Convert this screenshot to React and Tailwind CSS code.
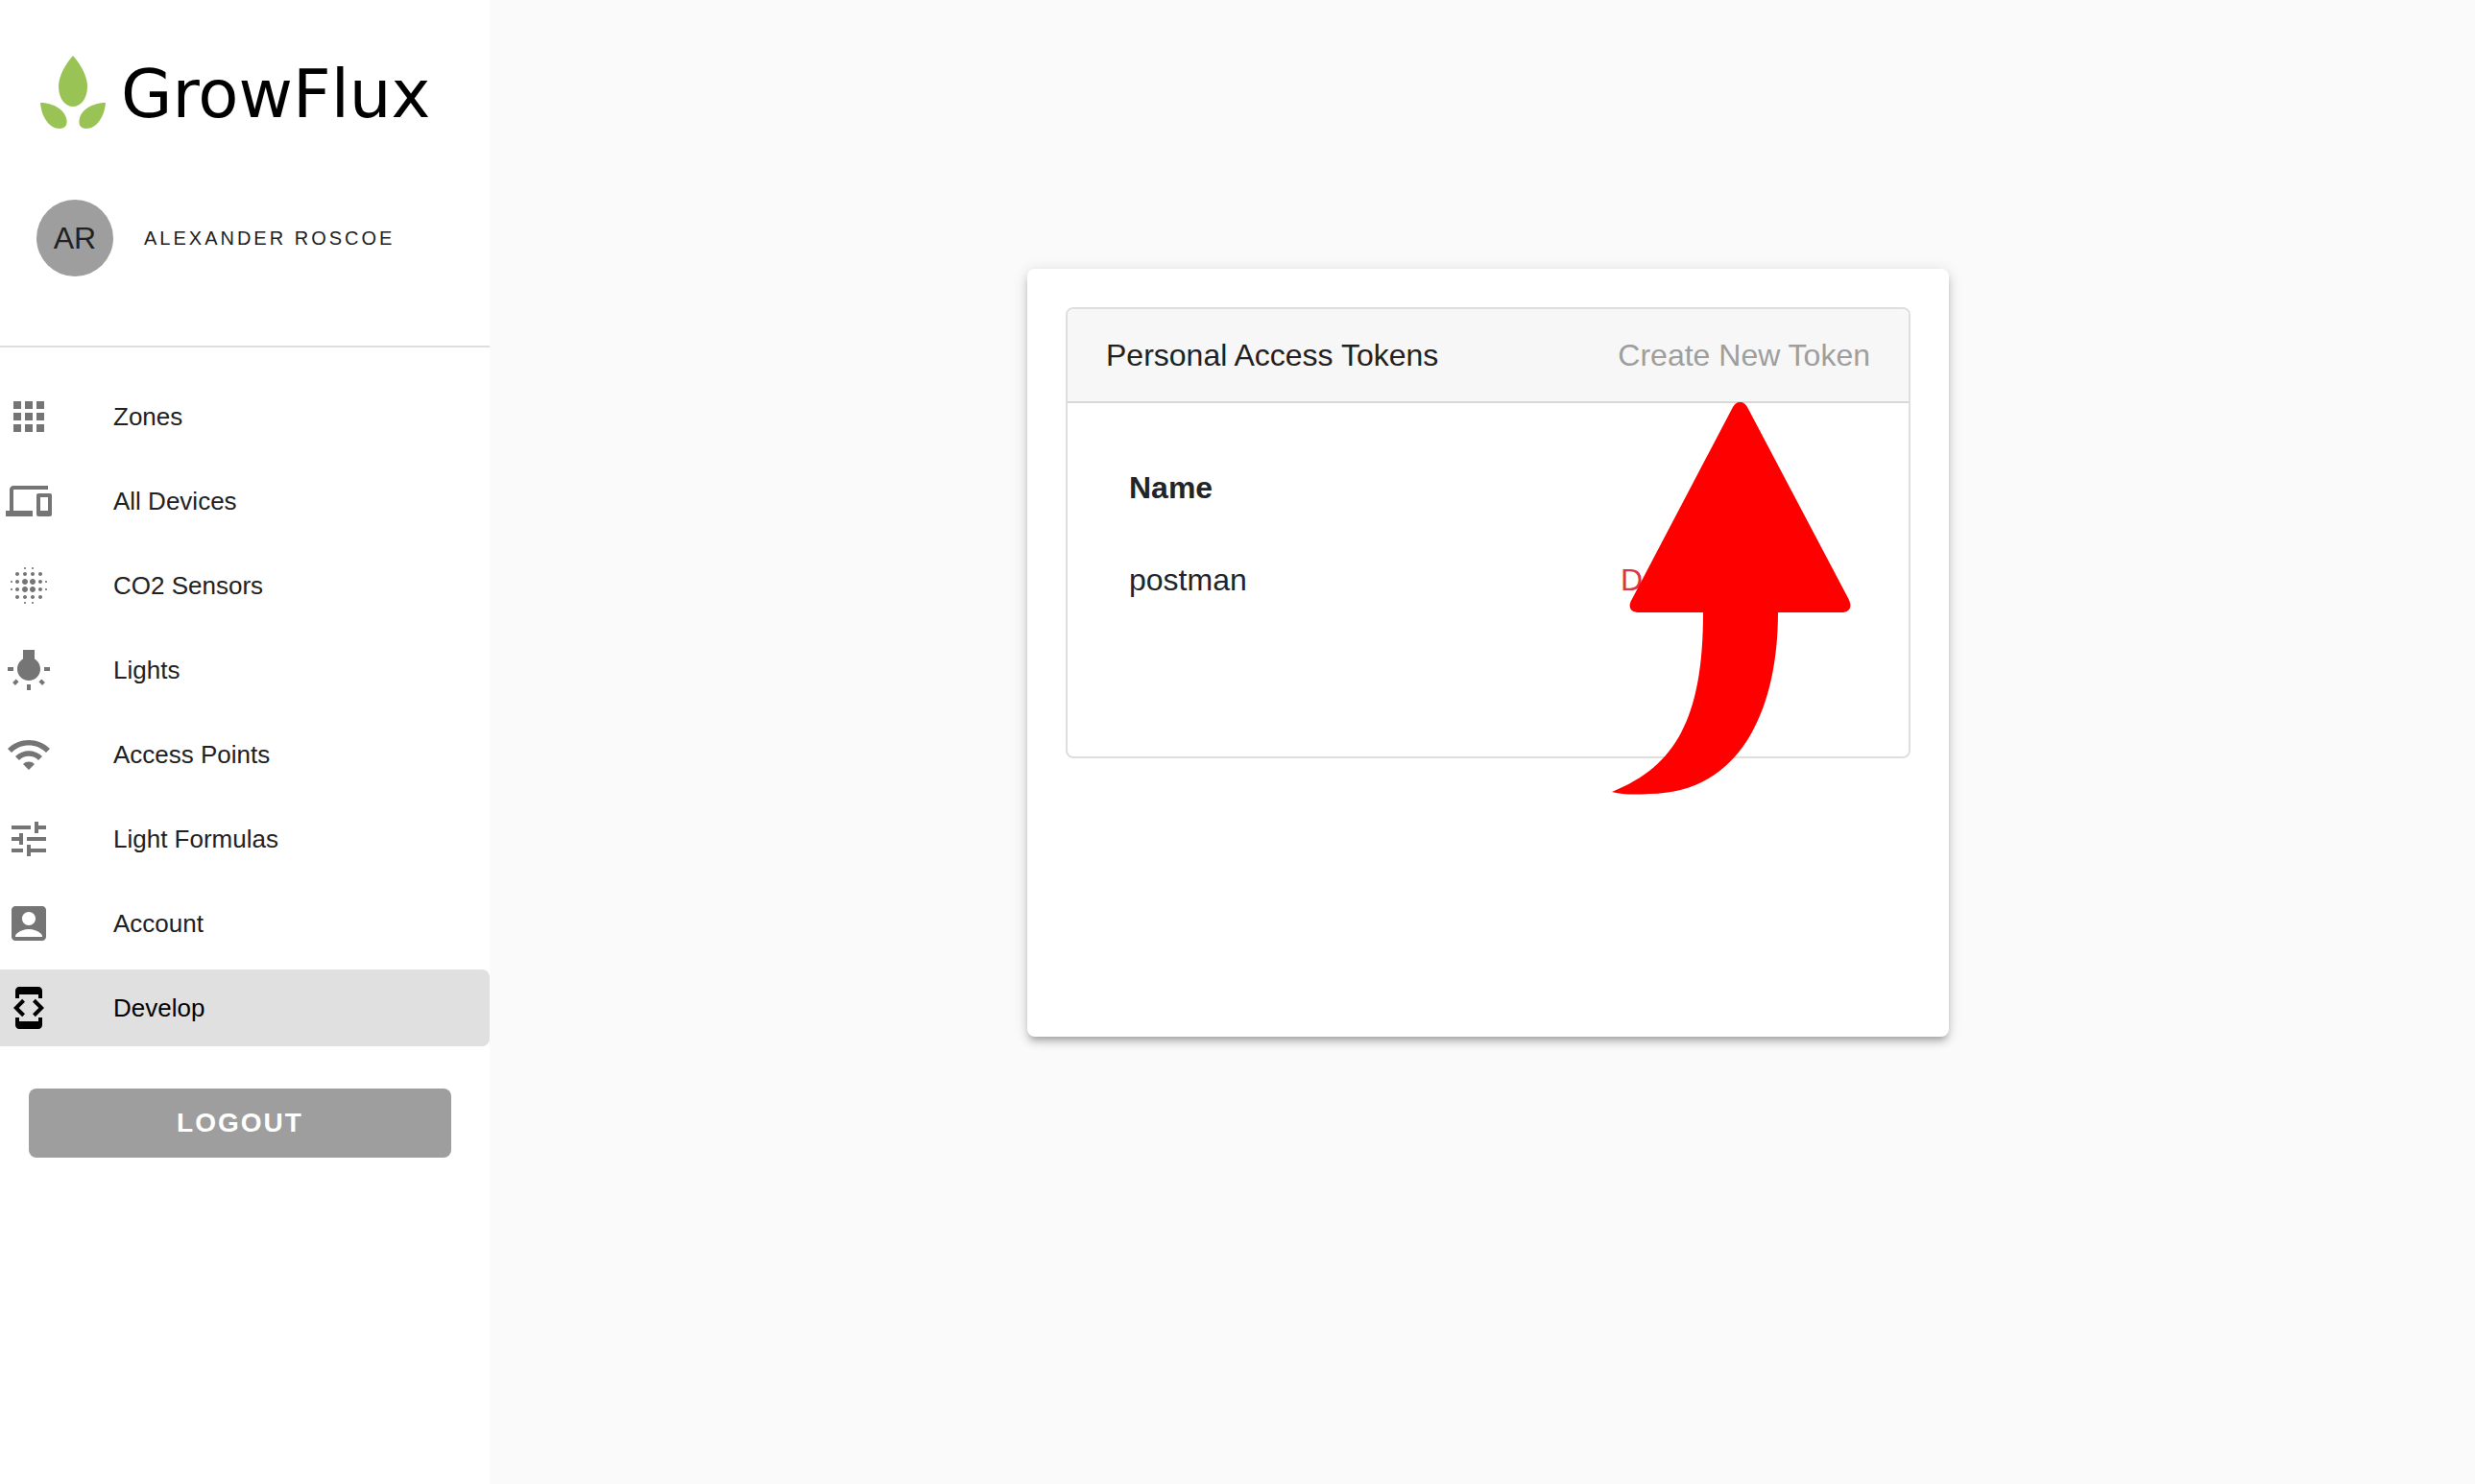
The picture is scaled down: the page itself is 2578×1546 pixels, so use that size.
import {
  MdApps,
  MdDevices,
  MdBlurOn,
  MdWbIncandescent,
  MdWifi,
  MdTune,
  MdAccountBox,
  MdDeveloperMode,
} from "react-icons/md";

const navItems = [
  { label: "Zones", Icon: MdApps },
  { label: "All Devices", Icon: MdDevices },
  { label: "CO2 Sensors", Icon: MdBlurOn },
  { label: "Lights", Icon: MdWbIncandescent },
  { label: "Access Points", Icon: MdWifi },
  { label: "Light Formulas", Icon: MdTune },
  { label: "Account", Icon: MdAccountBox },
  { label: "Develop", Icon: MdDeveloperMode, active: true },
];

function Logo() {
  return (
    <div className="flex h-20 items-center gap-4 pl-[42px]">
      <svg viewBox="0 0 68 78" className="h-[78px] w-[68px] shrink-0" fill="#99c455" aria-hidden="true">
        <path d="M34 1C42 10 49 22 49 33C49 46 42 54 34 54C26 54 19 46 19 33C19 22 26 10 34 1Z" />
        <path d="M0 50C13 50 25 57 27 66C29 73 26 77 20 77C9 77 1 64 0 50Z" />
        <path d="M68 50C55 50 43 57 41 66C39 73 42 77 48 77C59 77 67 64 68 50Z" />
      </svg>
      <span className="pt-1 font-['DejaVu_Sans',sans-serif] text-[69px] leading-20 text-black">GrowFlux</span>
    </div>
  );
}

function Sidebar() {
  return (
    <aside className="min-h-screen w-[510px] shrink-0 bg-white">
      <div className="border-b-2 border-[#dedede] pt-14 pb-[72px]">
        <Logo />
        <div className="mt-[72px] flex items-center gap-8 pl-[38px]">
          <div className="flex size-20 items-center justify-center rounded-full bg-[#9e9e9e] text-[32px]">AR</div>
          <span className="text-[20px] tracking-[3px] uppercase">Alexander Roscoe</span>
        </div>
      </div>
      <nav className="mt-8 flex flex-col gap-2">
        {navItems.map(({ label, Icon, active }) => (
          <a
            key={label}
            href="#"
            className={
              active
                ? "flex h-20 items-center gap-16 rounded-r-lg bg-[#e0e0e0] pl-1.5 text-[26px] text-black"
                : "flex h-20 items-center gap-16 rounded-r-lg pl-1.5 text-[26px]"
            }
          >
            <Icon className={active ? "size-12 text-black" : "size-12 text-[#757575]"} />
            {label}
          </a>
        ))}
      </nav>
      <div className="mt-11 pr-10 pl-[30px]">
        <button className="h-[72px] w-full rounded-lg bg-[#9e9e9e] text-[28px] font-bold tracking-[2px] text-white uppercase">
          Logout
        </button>
      </div>
    </aside>
  );
}

function PointerArrow() {
  return (
    <svg
      viewBox="0 0 252 412"
      className="pointer-events-none absolute top-[139px] left-[608px] h-[412px] w-[252px]"
      fill="#ff0000"
      aria-hidden="true"
    >
      <path d="M127 5C131 -2 138 -2 142 5L247 204C252 213 249 219 240 219H174C174 330 128 408 40 408C24 409 13 409 1 406C67 379 96 330 96 219H30C20 219 17 213 22 205Z" />
    </svg>
  );
}

export default function App() {
  return (
    <div className="flex min-h-screen bg-[#fafafa] font-['Liberation_Sans',Arial,sans-serif] text-[#212121]">
      <Sidebar />
      <main className="flex grow items-start justify-center pt-[280px] pl-3">
        <section className="relative min-h-[800px] w-full max-w-[960px] rounded-lg bg-white p-10 shadow-[0_6px_6px_-4px_rgba(0,0,0,0.2),0_6px_8px_0_rgba(0,0,0,0.14),0_2px_16px_0_rgba(0,0,0,0.12)]">
          <div className="overflow-hidden rounded-lg border-2 border-[#dedede] text-[32px] leading-[48px]">
            <header className="flex items-center justify-between border-b-2 border-[#d8d8d8] bg-[#f7f7f7] px-10 py-6">
              <h1>Personal Access Tokens</h1>
              <button className="text-[#9e9e9e]">Create New Token</button>
            </header>
            <div className="px-10 pt-10 pb-[136px] text-[#212529]">
              <table className="w-full table-fixed text-left">
                <thead>
                  <tr>
                    <th className="p-6 font-bold">Name</th>
                    <th className="w-[284px] p-6" aria-label="Actions" />
                  </tr>
                </thead>
                <tbody>
                  <tr>
                    <td className="p-6">postman</td>
                    <td className="p-6">
                      <button className="block text-[#dc3545]">Delete</button>
                    </td>
                  </tr>
                </tbody>
              </table>
            </div>
          </div>
          <PointerArrow />
        </section>
      </main>
    </div>
  );
}
